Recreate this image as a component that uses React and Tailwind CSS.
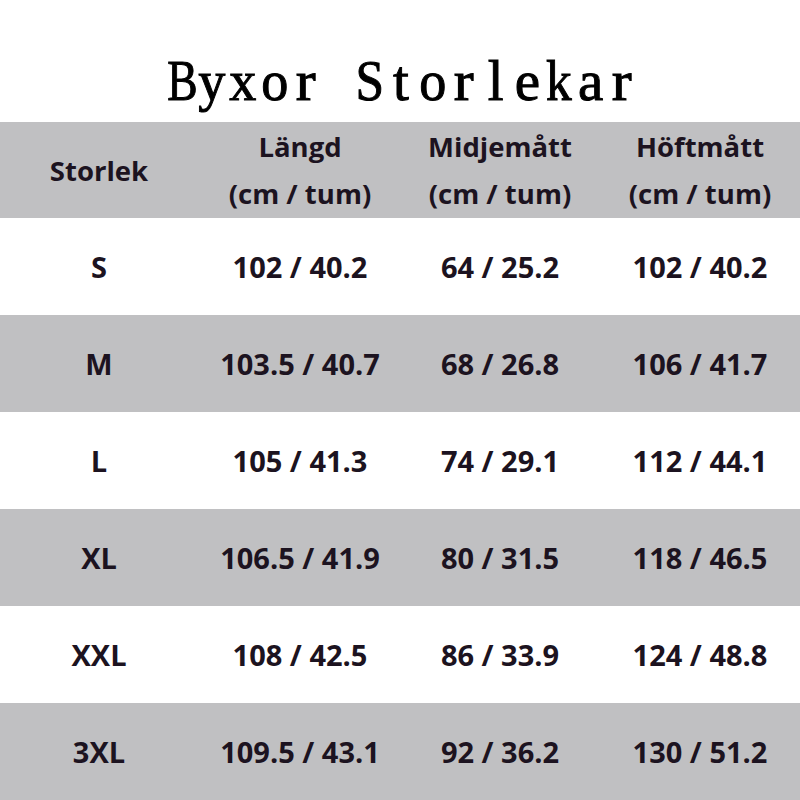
export default function App() {
  const rows = [
    ["S", "102 / 40.2", "64 / 25.2", "102 / 40.2"],
    ["M", "103.5 / 40.7", "68 / 26.8", "106 / 41.7"],
    ["L", "105 / 41.3", "74 / 29.1", "112 / 44.1"],
    ["XL", "106.5 / 41.9", "80 / 31.5", "118 / 46.5"],
    ["XXL", "108 / 42.5", "86 / 33.9", "124 / 48.8"],
    ["3XL", "109.5 / 43.1", "92 / 36.2", "130 / 51.2"],
  ];
  const sans = "font-['Open_Sans',sans-serif] font-bold text-[#1c1320]";
  const title = [
    ["B", "scale-x-[0.8]"],
    ["y", "scale-x-[0.95]"],
    ["x", "scale-x-[0.95]"],
    ["o", "scale-x-[0.95]"],
    ["r", "scale-x-[1.05]"],
    ["\u00a0", ""],
    ["S", "scale-x-[0.9]"],
    ["t", "scale-x-[1.0]"],
    ["o", "scale-x-[0.95]"],
    ["r", "scale-x-[1.05]"],
    ["l", "scale-x-[1.0]"],
    ["e", "scale-x-[1.0]"],
    ["k", "scale-x-[0.9]"],
    ["a", "scale-x-[1.0]"],
    ["r", "scale-x-[1.05]"],
  ];
  return (
    <div className="w-[800px] h-[800px] bg-white flex flex-col overflow-hidden">
      <div className="h-[122px] flex items-end justify-center pb-[13px]">
        <h1 className="flex font-['Liberation_Serif',serif] text-[57px] leading-none text-black pl-[2px] [-webkit-text-stroke:1px_black]">
          {title.map(([ch, s], i) => (
            <span key={i} className={`inline-block w-[31.6px] text-center ${s}`}>
              {ch}
            </span>
          ))}
        </h1>
      </div>
      <div className={`h-[96px] bg-[#c0c0c2] grid grid-cols-4 ${sans} text-[27.5px] leading-[47px]`}>
        <div className="flex items-center justify-center pr-[2px]">Storlek</div>
        <div className="flex flex-col items-center justify-center">
          <span>Längd</span>
          <span>(cm / tum)</span>
        </div>
        <div className="flex flex-col items-center justify-center">
          <span>Midjemått</span>
          <span>(cm / tum)</span>
        </div>
        <div className="flex flex-col items-center justify-center">
          <span>Höftmått</span>
          <span>(cm / tum)</span>
        </div>
      </div>
      {rows.map((r, i) => (
        <div
          key={i}
          className={`flex-1 grid grid-cols-4 ${sans} text-[29px] ${i % 2 === 1 ? "bg-[#c0c0c2]" : "bg-white"}`}
        >
          {r.map((c, j) => (
            <div key={j} className={`flex items-center justify-center ${j === 0 ? "pr-[2px]" : ""}`}>
              {c}
            </div>
          ))}
        </div>
      ))}
    </div>
  );
}
